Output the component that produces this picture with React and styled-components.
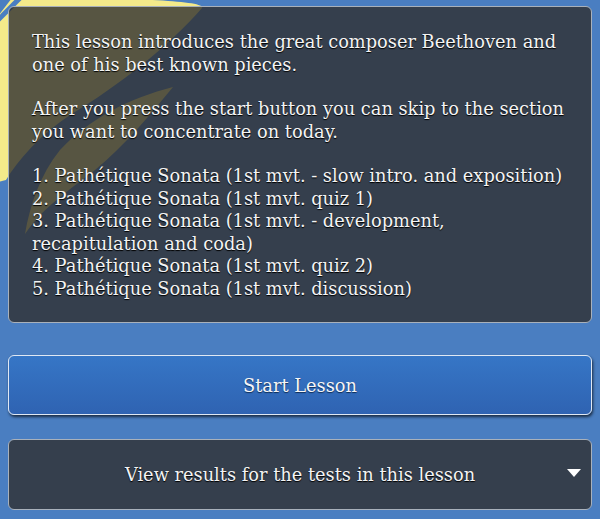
import styled, { createGlobalStyle } from "styled-components";

const GlobalStyle = createGlobalStyle`
  html, body {
    margin: 0;
    padding: 0;
    background: #4a7ec1;
  }
  body {
    font-family: "DejaVu Serif", "Liberation Serif", serif;
    color: #f4f4f4;
  }
`;

const Page = styled.div`
  position: relative;
  width: 600px;
  height: 519px;
  overflow: hidden;
  background: #4a7ec1;
`;

const Swoosh = styled.svg`
  position: absolute;
  left: 0;
  top: 0;
  z-index: 0;
`;

const Content = styled.div`
  position: relative;
  z-index: 1;
  display: flex;
  flex-direction: column;
  padding: 6px 8px 0 8px;
`;

const IntroPanel = styled.div`
  background: rgba(48, 48, 48, 0.8);
  border: 1px solid #a9b1bb;
  border-radius: 6px;
  padding: 24px 20px 22px 23px;
  font-size: 17.8px;
  line-height: 22.5px;
  text-shadow: 0 1px 1px #000;
`;

const Para = styled.p`
  margin: 0 0 22px 0;
`;

const SectionList = styled.div`
  display: flex;
  flex-direction: column;
`;

const SectionItem = styled.div`
  line-height: 22.5px;
`;

const StartButton = styled.button`
  margin-top: 32px;
  height: 60px;
  border: 1px solid #dfe8f4;
  border-radius: 6px;
  background: linear-gradient(#3676c6, #2f63b2);
  box-shadow: 1px 2px 3px rgba(0, 0, 0, 0.65);
  color: #f6f6f6;
  font-family: inherit;
  font-size: 17.8px;
  text-shadow: 0 1px 1px #0e2c55;
  cursor: pointer;
`;

const ResultsToggle = styled.div`
  position: relative;
  margin-top: 24px;
  height: 71px;
  box-sizing: border-box;
  display: flex;
  align-items: center;
  justify-content: center;
  background: rgba(48, 48, 48, 0.8);
  border: 1px solid #a9b1bb;
  border-radius: 6px;
  font-size: 17.8px;
  text-shadow: 0 1px 1px #000;
`;

const Caret = styled.span`
  position: absolute;
  right: 10px;
  top: 29px;
  width: 0;
  height: 0;
  border-left: 7px solid transparent;
  border-right: 7px solid transparent;
  border-top: 8px solid #ffffff;
`;

const sections = [
  "Pathétique Sonata (1st mvt. - slow intro. and exposition)",
  "Pathétique Sonata (1st mvt. quiz 1)",
  "Pathétique Sonata (1st mvt. - development, recapitulation and coda)",
  "Pathétique Sonata (1st mvt. quiz 2)",
  "Pathétique Sonata (1st mvt. discussion)",
];

export default function App() {
  return (
    <Page>
      <GlobalStyle />
      <Swoosh width="600" height="519" viewBox="0 0 600 519">
        <path
          d="M 12 -2 L 105 -2 C 160 0 205 2 202 8 C 170 45 120 85 70 115 C 40 135 18 160 6 180 L -2 182 L -2 16 Z"
          fill="#f4ea8a"
        />
        <path d="M -4 22 L 22 -4" stroke="#4a7ec1" strokeWidth="5" />
        <path
          d="M 173 87 C 130 98 90 118 60 150 C 40 175 30 205 25 234 C 45 205 70 190 95 170 C 125 145 150 115 173 87 Z"
          fill="#f4ea8a"
        />
      </Swoosh>
      <Content>
        <IntroPanel>
          <Para>
            This lesson introduces the great composer Beethoven and one of his
            best known pieces.
          </Para>
          <Para>
            After you press the start button you can skip to the section you
            want to concentrate on today.
          </Para>
          <SectionList>
            {sections.map((s, i) => (
              <SectionItem key={i}>{`${i + 1}. ${s}`}</SectionItem>
            ))}
          </SectionList>
        </IntroPanel>
        <StartButton>Start Lesson</StartButton>
        <ResultsToggle>
          View results for the tests in this lesson
          <Caret />
        </ResultsToggle>
      </Content>
    </Page>
  );
}
